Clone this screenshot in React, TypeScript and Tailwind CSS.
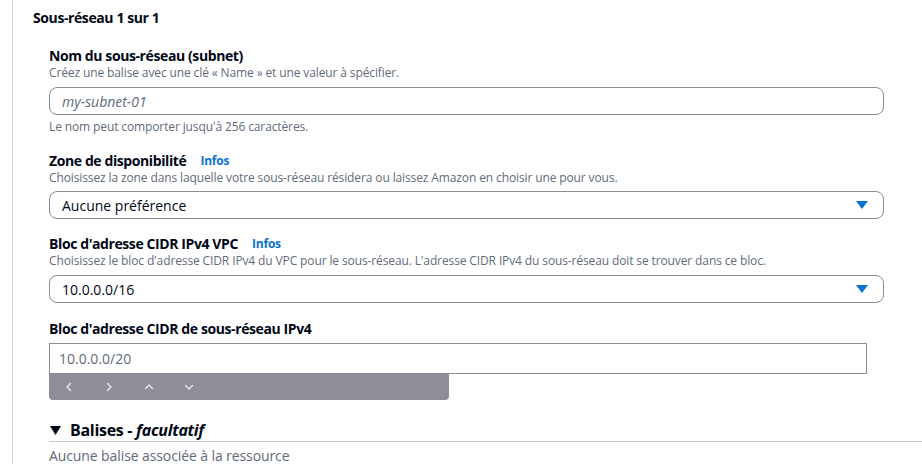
import React from "react";

function Caret() {
  return (
    <svg width="12" height="8" viewBox="0 0 12 8" className="shrink-0">
      <path d="M0 0 H12 L6 8 Z" fill="#0972d3" />
    </svg>
  );
}

function Chevron({ d }: { d: string }) {
  return (
    <svg width="12" height="12" viewBox="0 0 12 12" fill="none">
      <path d={d} stroke="#e9ebed" strokeWidth="1.4" strokeLinecap="round" strokeLinejoin="round" />
    </svg>
  );
}

function Label({ text, info }: { text: string; info?: boolean }) {
  return (
    <div className="flex h-[18px] items-center text-[14px] leading-[18px] font-bold tracking-[-0.4px] text-[#000716]">
      <span>{text}</span>
      {info && <span className="ml-[14px] text-[12px] font-bold tracking-[-0.2px] text-[#0972d3]">Infos</span>}
    </div>
  );
}

function Desc({ children }: { children: React.ReactNode }) {
  return <div className="text-[12px] leading-[16px] tracking-[-0.12px] text-[#5f6b7a]">{children}</div>;
}

function Select({ value }: { value: string }) {
  return (
    <div className="flex h-[28px] w-[835px] items-center justify-between rounded-lg border border-[#8c8c94] pl-[12px] pr-[15px] text-[14px] text-[#000716]">
      <span>{value}</span>
      <Caret />
    </div>
  );
}

export default function App() {
  return (
    <div className="h-screen overflow-hidden bg-white font-['Open_Sans',sans-serif] text-[#000716]">
      <div className="ml-[12px] h-full border-l border-[#d1d5db] pl-[20px] pt-[8px]">
        <h3 className="text-[14px] leading-[20px] font-bold tracking-[-0.4px]">Sous-réseau 1 sur 1</h3>

        <div className="pl-[16px]">
          <div className="mt-[19px]">
            <Label text="Nom du sous-réseau (subnet)" />
            <Desc>Créez une balise avec une clé « Name » et une valeur à spécifier.</Desc>
            <div className="mt-[6px] flex h-[28px] w-[835px] items-center rounded-lg border border-[#8c8c94] pl-[12px] text-[14px] italic text-[#5f6b7a]">
              my-subnet-01
            </div>
            <div className="mt-[4px]">
              <Desc>Le nom peut comporter jusqu'à 256 caractères.</Desc>
            </div>
          </div>

          <div className="mt-[17px]">
            <Label text="Zone de disponibilité" info />
            <Desc>Choisissez la zone dans laquelle votre sous-réseau résidera ou laissez Amazon en choisir une pour vous.</Desc>
            <div className="mt-[5px]">
              <Select value="Aucune préférence" />
            </div>
          </div>

          <div className="mt-[16px]">
            <Label text="Bloc d'adresse CIDR IPv4 VPC" info />
            <Desc>Choisissez le bloc d'adresse CIDR IPv4 du VPC pour le sous-réseau. L'adresse CIDR IPv4 du sous-réseau doit se trouver dans ce bloc.</Desc>
            <div className="mt-[6px]">
              <Select value="10.0.0.0/16" />
            </div>
          </div>

          <div className="mt-[17px]">
            <Label text="Bloc d'adresse CIDR de sous-réseau IPv4" />
            <div className="mt-[5px] flex h-[31px] w-[818px] items-center border border-[#8c8c94] pl-[9px] text-[14px] text-[#5f6b7a]">
              10.0.0.0/20
            </div>
            <div className="flex h-[26px] w-[400px] items-center gap-[28px] rounded-b-[4px] bg-[#8d8e96] pl-[14px]">
              <Chevron d="M7.5 2.5 L4 6 L7.5 9.5" />
              <Chevron d="M4.5 2.5 L8 6 L4.5 9.5" />
              <Chevron d="M2.5 7.5 L6 4 L9.5 7.5" />
              <Chevron d="M2.5 4.5 L6 8 L9.5 4.5" />
            </div>
          </div>

          <div className="mt-[19px]">
            <div className="flex h-[23px] items-start border-b border-[#c6c6cd] text-[16px] font-bold leading-[22px] tracking-[-0.3px]">
              <svg width="11" height="9" viewBox="0 0 11 9" className="mt-[7px] ml-[1px] mr-[9px]">
                <path d="M0 0 H11 L5.5 9 Z" fill="#000716" />
              </svg>
              <span>
                Balises - <span className="italic">facultatif</span>
              </span>
            </div>
            <div className="mt-[4px] text-[14px] leading-[20px] tracking-[-0.1px] text-[#5f6b7a]">Aucune balise associée à la ressource</div>
          </div>
        </div>
      </div>
    </div>
  );
}
